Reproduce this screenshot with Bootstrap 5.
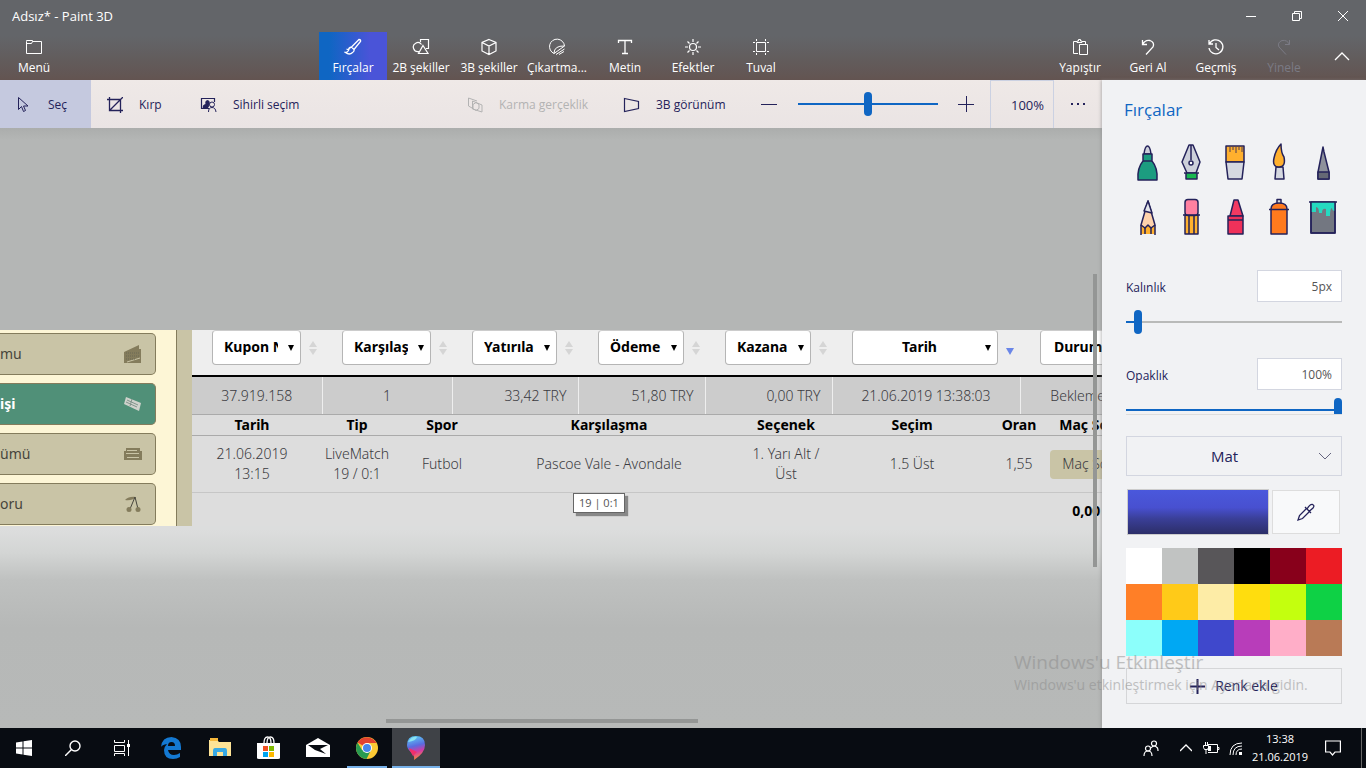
<!DOCTYPE html>
<html lang="tr">
<head>
<meta charset="utf-8">
<meta name="viewport" content="width=device-width, initial-scale=1">
<title>Adsız* - Paint 3D</title>
<link rel="stylesheet" href="https://cdn.jsdelivr.net/npm/bootstrap@5.3.0/dist/css/bootstrap.min.css">
<style>
:root{--ink:#24225a;--accent:#0f66c3;--tan:#c9c4a6;--olive:#847c5c}
body{font-family:"Open Sans","Noto Sans",sans-serif;font-size:12px;line-height:16px;color:var(--ink);overflow:hidden}
button,input,select{font:inherit;color:inherit}
button{background:none;border:0;padding:0}
svg{display:block;flex:none}
.line{fill:none;stroke:currentColor}
.app-head{background:linear-gradient(#636569 0,#636569 45%,#625c5c 75%,#635451 100%);color:#fff}
.title-bar{height:32px;font-size:13px}
.win-btn{width:46px;height:32px}
.ribbon{height:48px}
.tab-btn{width:68px;height:48px;padding-top:6px;gap:4px;white-space:nowrap}
.tab-on{background:linear-gradient(90deg,#0f66c3 15%,#4a54d8 75%)}
.tab-off{color:#7b7b85}
.tool-bar{height:48px;background:linear-gradient(#efe9e7,#eae4e4)}
.tool-btn{padding:1px 24px 0 16px;gap:16px;white-space:nowrap}
.tool-sel{background:#c5c9df;width:91px}
.tool-crop{width:93px}
.tool-mixed{width:156px;color:#b3b3b3}
.tool-view{width:138px}
.sq{width:48px}
.zoom-box{width:64px;border:1px solid #cbd1e2;border-width:1px 1px 0;text-align:right;padding:0 9px 0 0;background:none;font-size:13px}
.zoom-range{width:140px;margin:0 4px 0 5px}
input[type=range]{appearance:none;height:24px;padding:0;background:none;border:0;display:block}
input[type=range]::-webkit-slider-runnable-track{height:2px;background:linear-gradient(90deg,var(--accent) var(--fill,100%),#b9bab9 var(--fill,100%))}
input[type=range]::-webkit-slider-thumb{appearance:none;width:8px;height:24px;margin-top:-11px;border-radius:4px;background:var(--accent)}
.canvas-area{background:linear-gradient(#abadac 0,#b4b6b5 12px,#b4b6b5 380px,#dcdddd 381px,#dcdddd 402px,#d3d5d4 425px,#bfc1c0 452px,#b6b8b7 500px,#b7b9b8 100%);padding-top:202px;overflow:hidden}
.web-shot{height:196px;font-family:"Noto Sans","Open Sans",sans-serif;font-size:14px;line-height:20px;color:#3a3a40;overflow:hidden}
.web-menu{width:192px;background:#fdf6d6;border-right:15px solid var(--tan);box-shadow:inset -1px 0 var(--olive);padding-top:3px;gap:8px}
.web-item{width:156px;height:42px;flex:none;border:1px solid var(--olive);border-left:0;border-radius:0 5px 5px 0;background:var(--tan);padding:0 12px 0 0;color:#46453c}
.web-on{background:#509078;color:#fff;font-weight:700}
.web-grid{background:#ddd;overflow:hidden}
.web-grid table{table-layout:fixed;width:960px;margin:0;border-collapse:collapse}
.web-grid th,.web-grid td{padding:0;text-align:center;vertical-align:middle}
.web-grid td{font-weight:300}
.filters th{background:#eee;height:46px;border-bottom:2px solid #000;vertical-align:top}
.filters div{padding-left:20px}
.pick{appearance:none;height:35px;flex:none;margin-right:8px;border:1px solid #b5b5b5;border-top-color:#ccc;border-radius:4px;background:#fff url("data:image/svg+xml,%3Csvg xmlns='http://www.w3.org/2000/svg' width='6' height='6'%3E%3Cpath d='M0 0h6L3 6z'/%3E%3C/svg%3E") no-repeat right 6px center;padding:0 22px 2px 11px;color:#000;font-weight:700}
.slip td{height:38px;background:#ccc;border-right:1px solid #eee}
.slip .num{text-align:right;padding-right:11px}
.names th{height:21px;border:1px solid #aaa;border-width:1px 0;color:#000;line-height:18px}
.entry td{height:57px;border-bottom:1px solid #c6c6c6}
.score-btn{background:var(--tan);border-radius:4px;height:29px;padding:0 12px;white-space:nowrap}
.sum td{height:36px;color:#000;font-weight:700}
.tip-box{left:573px;bottom:215px;background:#fff;border:1px solid #666;padding:1px 5px;box-shadow:3px 3px 1px #888;color:#555;font-size:11px}
.scroll-v{right:5px;top:146px;width:4px;height:293px;background:#949695}
.scroll-h{left:35%;bottom:5px;width:312px;height:4px;background:#949695}
.side{width:264px;background:#f1f2f4;padding:20px 24px 24px;box-shadow:-1px 0 3px #8888}
.side h1{font-size:17px;line-height:20px;color:var(--accent);margin:0 0 23px -2px;font-weight:400}
.brushes{display:grid;grid-template-columns:repeat(5,44px);row-gap:15px;margin-left:-1px}
.brushes svg{width:44px;height:40px;stroke:var(--ink);stroke-width:1.5;stroke-linejoin:round}
.val{width:85px;height:32px;border:1px solid #d3d6e0;background:#fff;text-align:right;padding:0 9px;color:#555;font-size:12px}
.size-row{margin-top:32px}
.op-row{margin-top:24px}
.op-clip{height:17px;margin-top:8px;overflow:hidden;border-bottom:1px solid #ddd}
.finish{appearance:none;height:40px;margin-top:21px;border:1px solid #d3d6e0;background:url("data:image/svg+xml,%3Csvg xmlns='http://www.w3.org/2000/svg' width='12' height='8' fill='none' stroke='%23666680'%3E%3Cpath d='M0 1l6 6 6-6'/%3E%3C/svg%3E") no-repeat right 10px center;font-size:15px;text-align:center;padding:0 19px 0 0}
.color-row{margin:13px 2px 0 1px}
.now{width:142px;height:46px;border:1px solid #ccc;background:linear-gradient(#4a58dc 0,#4850d0 40%,#3a3f98 65%,#2c2e68 100%)}
.dropper{width:68px;height:44px;border:1px solid #ddd;background:#f8f9fa}
.palette{display:grid;grid-template-columns:repeat(6,1fr);margin-top:13px}
.palette button{height:36px}
.add-btn{height:36px;margin-top:12px;border:1px solid #d5d6d8;font-size:14px;gap:10px}
.wm{right:54px;bottom:73px;width:298px;color:#8b8b8b;opacity:.5;pointer-events:none;white-space:nowrap;font-size:14px;line-height:20px}
.wm div:first-child{font-size:19px;line-height:26px}
.task-bar{height:40px;background:#080c12;color:#fff}
.tb{width:48px;height:40px;display:flex;align-items:center;justify-content:center;flex:none}
.tb-run{box-shadow:inset 0 -2px #76b0e8;width:40px;margin:0 4px}
.tb-on{background:#3f4247;box-shadow:inset 0 -2px #76b0e8}
.w26{width:26px}.w24{width:24px}.w44{width:44px}.w40{width:40px}
.clock{width:66px;line-height:18px;text-align:center;white-space:nowrap;font-size:11px}
.peek{width:5px;margin-left:8px;border-left:1px solid #666}
</style>
</head>
<body class="d-flex flex-column vh-100">
<header class="app-head">
  <div class="title-bar d-flex align-items-center">
    <span class="ms-2 ps-1 me-auto">Adsız* - Paint 3D</span>
    <button class="win-btn d-flex align-items-center justify-content-center" aria-label="Simge durumuna küçült"><svg width="10" height="10" class="line"><path d="M0 5.500h10"/></svg></button>
    <button class="win-btn d-flex align-items-center justify-content-center" aria-label="Önceki boyut"><svg width="10" height="10" class="line"><path d="M.5 2.500h7v7h-7zM2.500 2V.5h7v7H8"/></svg></button>
    <button class="win-btn d-flex align-items-center justify-content-center" aria-label="Kapat"><svg width="10" height="10" class="line"><path d="M0 0l10 10M10 0L0 10"/></svg></button>
  </div>
  <nav class="ribbon d-flex">
    <button class="tab-btn d-flex flex-column align-items-center"><svg width="18" height="18" class="line"><path d="M1.500 3.500v12h15v-12H7.500v-1h-6zM1.500 5.500h5l1-2"/></svg>Menü</button>
    <div class="d-flex mx-auto">
      <button class="tab-btn tab-on d-flex flex-column align-items-center"><svg width="18" height="18" class="line" stroke-width="1.300"><path d="M15 1.500q2 0 1.500 2L10 11.500 7.500 9zM7.500 9q-3 .5-3 3.500-1 2-3 2 4 3 7 0 2-1 1.500-3M5 12l-2.500-1"/></svg>Fırçalar</button>
      <button class="tab-btn d-flex flex-column align-items-center"><svg width="18" height="18" class="line" stroke-width="1.200"><path d="M8.500 4V1.500h8v9h-2.500M7 13.500a4.500 4.500 0 1 1 2.500-7M11 7.500l5 8H6.500z"/></svg>2B şekiller</button>
      <button class="tab-btn d-flex flex-column align-items-center"><svg width="18" height="18" class="line" stroke-width="1.200"><path d="M9 1.500l7 3v8.500L9 16.500l-7-3.500V4.500zM2 4.500l7 3.500 7-3.500M9 8v8.500"/></svg>3B şekiller</button>
      <button class="tab-btn d-flex flex-column align-items-center"><svg width="18" height="18" class="line"><path d="M6 15.500A7.500 7.500 0 1 1 16.500 8M6 15.500q0-8 10.500-7.500M6 15.500L16.500 8M8 16.500l8.500-5.500M11 16.500l5-3"/></svg>Çıkartma...</button>
      <button class="tab-btn d-flex flex-column align-items-center"><svg width="18" height="18" class="line"><path d="M2.500 5V2.500h13V5M9 2.500v13M6 15.500h6" stroke-width="1.300"/></svg>Metin</button>
      <button class="tab-btn d-flex flex-column align-items-center"><svg width="18" height="18" class="line" stroke-width="1.200"><circle cx="9" cy="9" r="3.500"/><path d="M9 1v3M9 14v3M1 9h3M14 9h3M3.500 3.500l2 2M12.500 12.500l2 2M14.500 3.500l-2 2M5.500 12.500l-2 2"/></svg>Efektler</button>
      <button class="tab-btn d-flex flex-column align-items-center"><svg width="18" height="18" class="line"><path d="M4.500 4.500h9v9h-9zM4.500 1v2M13.500 1v2M4.500 15v2M13.500 15v2M1 4.500h2M1 13.500h2M15 4.500h2M15 13.500h2"/></svg>Tuval</button>
    </div>
    <button class="tab-btn d-flex flex-column align-items-center"><svg width="18" height="18" class="line"><path d="M7 15.500H2.500v-12H6M11 3.500h3.500V6M6 4.500V3h1.500V1.500h2V3H11v1.500zM8.500 6.500h8v10h-8z"/></svg>Yapıştır</button>
    <button class="tab-btn d-flex flex-column align-items-center"><svg width="18" height="18" class="line"><path d="M3.500 2v4.500H8M3.500 6.500Q6 1.500 11 2.500q5 2 3 6.500L7 16.500" stroke-width="1.300"/></svg>Geri Al</button>
    <button class="tab-btn d-flex flex-column align-items-center"><svg width="18" height="18" class="line" stroke-width="1.300"><path d="M2 2v4h4M2.500 6a7 7 0 1 1-.5 4M9 5v4.500l3 2.500"/></svg>Geçmiş</button>
    <button class="tab-btn tab-off d-flex flex-column align-items-center" disabled><svg width="18" height="18" class="line"><path d="M14.500 2v4.500H10M14.500 6.500Q12 1.500 7 2.500q-5 2-3 6.500l7 7.500"/></svg>Yinele</button>
    <button class="sq d-flex align-items-center justify-content-center" aria-label="Şeridi daralt"><svg width="16" height="10" class="line" stroke-width="1.300"><path d="M1 9l7-7 7 7"/></svg></button>
  </nav>
</header>

<main class="d-flex flex-grow-1" style="min-height:0">
  <section class="d-flex flex-column flex-grow-1" style="min-width:0">
    <div class="tool-bar d-flex align-items-stretch flex-shrink-0">
      <button class="tool-btn tool-sel d-flex align-items-center"><svg width="16" height="18" class="line"><path d="M2.500 1.500v12l3-3 2 5 2-1-2-4.500H12z"/></svg>Seç</button>
      <button class="tool-btn tool-crop d-flex align-items-center"><svg width="16" height="16" class="line" stroke-width="1.300"><path d="M0 2.500h13.500V16M2.500 0v13.500H16M16 0L2.500 13.500"/></svg>Kırp</button>
      <button class="tool-btn d-flex align-items-center"><svg width="17" height="16" class="line"><path d="M9 11.500H1.500v-10h13V5" stroke-width="1.200"/><path d="M3 10.500q0-3 3-3-1-4 1.500-4T9 7.500l-1 3z" fill="currentColor"/><circle cx="12" cy="7.500" r="2.500"/><path d="M8.500 15q0-4.500 3.500-4.500t4 4.500"/></svg>Sihirli seçim</button>
      <button class="tool-btn tool-mixed d-flex align-items-center ms-auto" disabled><svg width="16" height="16" class="line"><path d="M10 4L1.500 1v8L5 11M5.500 12V4L15 8v7zM6 7.500l3-2 3 2v4l-3 2-3-2z"/></svg>Karma gerçeklik</button>
      <button class="tool-btn tool-view d-flex align-items-center"><svg width="17" height="16" class="line" stroke-width="1.200"><path d="M1.500 1.500l14 3v7l-14 3z"/></svg>3B görünüm</button>
      <button class="sq d-flex align-items-center justify-content-center" aria-label="Uzaklaştır"><svg width="16" height="16" class="line"><path d="M0 8.500h16"/></svg></button>
      <input class="zoom-range align-self-center" type="range" min="0" max="100" value="50" aria-label="Yakınlaştırma">
      <button class="sq d-flex align-items-center justify-content-center" aria-label="Yakınlaştır"><svg width="16" height="16" class="line"><path d="M0 8.500h16M8.500 0v16"/></svg></button>
      <input class="zoom-box" value="100%" aria-label="Yakınlaştırma yüzdesi">
      <button class="sq d-flex align-items-center justify-content-center" aria-label="Diğer"><svg width="16" height="4" fill="currentColor"><path d="M1 1h2v2H1zM7 1h2v2H7zM13 1h2v2h-2z"/></svg></button>
    </div>
    <div class="canvas-area position-relative flex-grow-1">
      <div class="web-shot d-flex">
        <nav class="web-menu d-flex flex-column flex-shrink-0">
          <button class="web-item d-flex align-items-center justify-content-between">mu<svg width="20" height="20" fill="#847c5c"><path d="M1 8L16 1v4h2v14H1z"/><path d="M4 18l13-4" stroke="#c9c4a6"/><path d="M3 9h13M3 12h13M3 15h10" stroke="#6b6854" stroke-dasharray="1"/></svg></button>
          <button class="web-item web-on d-flex align-items-center justify-content-between">işi<svg width="20" height="20" fill="#cfd2cc"><path d="M3 3l15 6-2 8L1 10z"/><path d="M4 6l11 5M3 8l11 5M9 5l-2 7" stroke="#82948c" fill="none"/></svg></button>
          <button class="web-item d-flex align-items-center justify-content-between">ümü<svg width="20" height="20" fill="#847c5c"><path d="M3 4h14v3h2v9H1V7h2z"/><path d="M4 6.500h10M3 9.500h13M4 13.500h12" stroke="#c9c4a6"/></svg></button>
          <button class="web-item d-flex align-items-center justify-content-between">oru<svg width="20" height="20" fill="#847c5c"><path d="M2 6q4-4 11-3-4 4-11 3z"/><path d="M12 3L7 15M12 3l3 12" class="line" stroke="#847c5c"/><circle cx="6" cy="15.500" r="2.500"/><circle cx="15" cy="15.500" r="2.500"/></svg></button>
        </nav>
        <div class="web-grid flex-grow-1">
          <table>
            <colgroup><col style="width:130px"><col style="width:130px"><col style="width:126px"><col style="width:127px"><col style="width:127px"><col style="width:188px"><col></colgroup>
            <thead><tr class="filters">
              <th><div class="d-flex align-items-center"><select class="pick" style="width:89px" aria-label="Kupon No"><option>Kupon N</option></select><svg width="8" height="14" fill="#d5d5d5"><path d="M0 6l4-6 4 6zM0 8h8l-4 6z"/></svg></div></th>
              <th><div class="d-flex align-items-center"><select class="pick" style="width:89px" aria-label="Karşılaşma"><option>Karşılaş</option></select><svg width="8" height="14" fill="#d5d5d5"><path d="M0 6l4-6 4 6zM0 8h8l-4 6z"/></svg></div></th>
              <th><div class="d-flex align-items-center"><select class="pick" style="width:85px" aria-label="Yatırılan"><option>Yatırıla</option></select><svg width="8" height="14" fill="#d5d5d5"><path d="M0 6l4-6 4 6zM0 8h8l-4 6z"/></svg></div></th>
              <th><div class="d-flex align-items-center"><select class="pick" style="width:86px" aria-label="Ödeme"><option>Ödeme</option></select><svg width="8" height="14" fill="#d5d5d5"><path d="M0 6l4-6 4 6zM0 8h8l-4 6z"/></svg></div></th>
              <th><div class="d-flex align-items-center"><select class="pick" style="width:86px" aria-label="Kazanç"><option>Kazana</option></select><svg width="8" height="14" fill="#d5d5d5"><path d="M0 6l4-6 4 6zM0 8h8l-4 6z"/></svg></div></th>
              <th><div class="d-flex align-items-center"><select class="pick text-center" style="width:146px" aria-label="Tarih"><option>Tarih</option></select><svg width="8" height="14" fill="#6a86e8"><path d="M0 7h8l-4 7z"/></svg></div></th>
              <th><div class="d-flex align-items-center"><select class="pick" style="width:110px;padding-left:13px" aria-label="Durum"><option>Durum</option></select></div></th>
            </tr></thead>
            <tbody><tr class="slip"><td>37.919.158</td><td>1</td><td class="num">33,42 TRY</td><td class="num">51,80 TRY</td><td class="num">0,00 TRY</td><td>21.06.2019 13:38:03</td><td>Beklemede</td></tr></tbody>
          </table>
          <table>
            <colgroup><col style="width:120px"><col style="width:90px"><col style="width:80px"><col style="width:254px"><col style="width:100px"><col style="width:152px"><col style="width:62px"><col></colgroup>
            <thead><tr class="names"><th>Tarih</th><th>Tip</th><th>Spor</th><th>Karşılaşma</th><th>Seçenek</th><th>Seçim</th><th>Oran</th><th>Maç Sonucu</th></tr></thead>
            <tbody>
              <tr class="entry"><td>21.06.2019<br>13:15</td><td>LiveMatch<br>19 / 0:1</td><td>Futbol</td><td>Pascoe Vale - Avondale</td><td>1. Yarı Alt /<br>Üst</td><td>1.5 Üst</td><td>1,55</td><td><button class="score-btn">Maç Sonucu</button></td></tr>
              <tr class="sum"><td colspan="7"></td><td class="fw-bold">0,00 TRY</td></tr>
            </tbody>
          </table>
        </div>
      </div>
      <div class="tip-box position-absolute" role="tooltip">19 | 0:1</div>
      <div class="scroll-v position-absolute"></div>
      <div class="scroll-h position-absolute"></div>
    </div>
  </section>

  <aside class="side flex-shrink-0 position-relative">
    <h1>Fırçalar</h1>
    <div class="brushes">
      <button aria-label="Keçeli kalem"><svg viewBox="0 0 44 40"><path d="M19 11q1-8 3.500-8T26 11z" fill="#cdd0da"/><path d="M18 11h9v7q6 7 5 19H13q-1-12 5-19z" fill="#1c9c80"/><path d="M18 18h9"/></svg></button>
      <button aria-label="Hat kalemi"><svg viewBox="0 0 44 40"><path d="M20 2h4l7 17-4 11h-9l-5-11z" fill="#cdd0da"/><path d="M17 30h11v6H17zM15 30h15" fill="#18b850"/><path d="M22 2v15"/><circle cx="22" cy="20" r="2" fill="#fff"/></svg></button>
      <button aria-label="Yağlı boya fırçası"><svg viewBox="0 0 44 40"><path d="M13 3h18v16H13z" fill="#ffb02e"/><path d="M13 19h18l-2 17H15z" fill="#d5d8e0"/><path d="M17 4v5M20 4v3M23 4v6M26 4v3M29 4v5" stroke-width=".8"/></svg></button>
      <button aria-label="Sulu boya"><svg viewBox="0 0 44 40"><path d="M19 24h7l1 12h-9z" fill="#d5d8e0"/><path d="M24 1q0 9 3 13 2 10-5 10-7 0-5-9 2-9 7-14z" fill="#ffb02e"/></svg></button>
      <button aria-label="Piksel kalem"><svg viewBox="0 0 44 40"><path d="M22 4l1 5 5 20v7H17v-7l4-20z" fill="#8e919b"/><path d="M17 29h11v7H17z" fill="#656875"/></svg></button>
      <button aria-label="Kurşun kalem"><svg viewBox="0 0 44 40"><path d="M16 26h14v10H16z" fill="#ffb02e" stroke="none"/><path d="M23 3l7 24-4 3-3-3-3 3-4-3z" fill="#ffd3ac"/><path d="M23 3l4 12-8-2z" fill="#e4e6ec"/><path d="M16 27v10M30 27v10M20 30v6M26 30v6"/></svg></button>
      <button aria-label="Silgi"><svg viewBox="0 0 44 40"><path d="M16 17h13v19H16z" fill="#ffb02e"/><rect x="16" y="1.500" width="13" height="16" rx="3" fill="#ff80a0"/><path d="M14 17h17M20 18v18M25 18v18"/></svg></button>
      <button aria-label="Mum boya"><svg viewBox="0 0 44 40"><path d="M17 18l4-16h4l5 16z" fill="#f23a62"/><path d="M15 18h15v18H15z" fill="#ef315a"/><path d="M15 22h15"/></svg></button>
      <button aria-label="Sprey boya"><svg viewBox="0 0 44 40"><path d="M20 1.500h4V6h-4z" fill="#ddd"/><path d="M14 11q0-6 8-6t8 6v25H14z" fill="#ff7a1e"/><path d="M12 11.500h20"/></svg></button>
      <button aria-label="Doldur"><svg viewBox="0 0 44 40"><path d="M10 4h24v31H10z" fill="#737781"/><path d="M10 4h24v9q-3 0-3-3-2 0-2 8h-4v-7q-4-1-4 4h-3q0-6-3-6v5h-5z" fill="#25d9c0" stroke="none"/><path d="M10 4h24v31H10zM8 4h28" fill="none"/></svg></button>
    </div>
    <div class="size-row d-flex align-items-center justify-content-between"><label for="sz" class="pt-1">Kalınlık</label><input id="sz" class="val" value="5px"></div>
    <input class="w-100 mt-2" type="range" min="1" max="100" value="5" aria-label="Kalınlık" style="--fill:6%">
    <div class="op-row d-flex align-items-center justify-content-between"><label for="op" class="pt-1">Opaklık</label><input id="op" class="val" value="100%"></div>
    <div class="op-clip"><input class="w-100" type="range" min="0" max="100" value="100" aria-label="Opaklık"></div>
    <select class="finish w-100" aria-label="Kaplama"><option>Mat</option></select>
    <div class="color-row d-flex justify-content-between align-items-center">
      <button class="now" aria-label="Geçerli renk"></button>
      <button class="dropper d-flex align-items-center justify-content-center" aria-label="Renk seçici"><svg width="18" height="18" class="line" stroke-width="1.300"><path d="M9.500 5.500l-7 7L1 17l4.500-1.500 7-7M8 4l6 6M10 6q3-5 5.500-4.500 2.500 1 .5 3.500l-4 3.500"/></svg></button>
    </div>
    <div class="palette">
      <button style="background:#fff" aria-label="Beyaz"></button><button style="background:#c1c3c2" aria-label="Açık gri"></button><button style="background:#585659" aria-label="Koyu gri"></button><button style="background:#000" aria-label="Siyah"></button><button style="background:#88001b" aria-label="Koyu kırmızı"></button><button style="background:#ec1c24" aria-label="Kırmızı"></button>
      <button style="background:#ff7f27" aria-label="Turuncu"></button><button style="background:#ffca18" aria-label="Altın"></button><button style="background:#fdeca6" aria-label="Krem"></button><button style="background:#ffdd0e" aria-label="Sarı"></button><button style="background:#c4ff0e" aria-label="Limon"></button><button style="background:#0ed145" aria-label="Yeşil"></button>
      <button style="background:#8cfffb" aria-label="Turkuaz"></button><button style="background:#00a8f3" aria-label="Mavi"></button><button style="background:#3f48cc" aria-label="Çivit"></button><button style="background:#b83dba" aria-label="Mor"></button><button style="background:#ffaec8" aria-label="Pembe"></button><button style="background:#b97a56" aria-label="Kahverengi"></button>
    </div>
    <button class="add-btn w-100 d-flex align-items-center justify-content-center"><svg width="15" height="15" class="line" stroke-width="2"><path d="M0 7.500h15M7.500 0v15"/></svg>Renk ekle</button>
  </aside>
</main>

<div class="wm position-absolute"><div>Windows'u Etkinleştir</div><div>Windows'u etkinleştirmek için Ayarlar'a gidin.</div></div>

<footer class="task-bar d-flex flex-shrink-0 position-relative">
  <div class="d-flex me-auto" style="gap:1px">
    <button class="tb" aria-label="Başlat"><svg width="16" height="16" fill="#fff"><path d="M0 2.500L6.500 1.500v6H0zM7.500 1.300L16 0v7.500H7.500zM0 8.500h6.500v6L0 13.500zM7.500 8.500H16V16l-8.500-1.300z"/></svg></button>
    <button class="tb" aria-label="Ara"><svg width="16" height="16" class="line" stroke-width="1.400"><circle cx="10" cy="6" r="5"/><path d="M6.500 9.500L0 16"/></svg></button>
    <button class="tb" aria-label="Görev görünümü"><svg width="18" height="16" class="line"><path d="M1.500 0v2.500h10V0M1.500 5.500h10v6h-10zM1.500 16v-2.500h10V16M15.500 0v16"/><path d="M14 4h3v3h-3z" fill="#fff" stroke="none"/></svg></button>
    <button class="tb" aria-label="Edge"><svg width="20" height="22" fill="#1479d2"><path d="M0 10Q1 0 10.500 0 20 1 20 10v3H7q1 5 6 5 3 0 6-2v4q-3 2-7 2-9 0-9-9 0-3 3-6Q1 8 0 10zm7-1h7q0-4-3.500-4T7 9z"/></svg></button>
    <button class="tb" aria-label="Dosya Gezgini"><svg width="22" height="20"><path d="M0 2h8l2 2h12v14H0z" fill="#fde396"/><path d="M1 0h8v3H1z" fill="#f6b83c"/><path d="M4 18v-5q0-3 2-3h10q2 0 2 3v5h-4v-4H8v4z" fill="#38a9e4"/></svg></button>
    <button class="tb" aria-label="Mağaza"><svg width="24" height="24"><path d="M7 7q0-6 3.500-6T14 7M10 7q0-6 3.500-6T17 7" class="line" stroke="#fff" stroke-width="1.300"/><path d="M0 7h23v15q0 1-2 1H2q-2 0-2-1z" fill="#fff"/><path d="M6 10h5v5H6z" fill="#f05022"/><path d="M12 10h5v5h-5z" fill="#7fba00"/><path d="M6 16h5v5H6z" fill="#00a4ef"/><path d="M12 16h5v5h-5z" fill="#ffb900"/></svg></button>
    <button class="tb" aria-label="Posta"><svg width="24" height="20"><path d="M0 7l12-7 12 7v12H0z" fill="#fff"/><path d="M2 7h20l-8 4 6 5L9 12z" fill="#080c12"/></svg></button>
    <button class="tb tb-run" aria-label="Chrome"><svg width="22" height="22" viewBox="0 0 22 22"><circle cx="11" cy="11" r="11" fill="#fcc934"/><path d="M11 11L1.500 5.500A11 11 0 0 1 20.500 6H11z" fill="#e2422f"/><path d="M1.500 5.500a11 11 0 0 0 9 16.500l4.500-9H6z" fill="#289b51"/><circle cx="11" cy="11" r="5" fill="#fff"/><circle cx="11" cy="11" r="4" fill="#4786ea"/></svg></button>
    <button class="tb tb-on" aria-label="Paint 3D"><svg width="20" height="24" viewBox="0 0 20 24"><defs><linearGradient id="drop" x1=".4" x2=".6" y2="1"><stop offset="0" stop-color="#5cc9f5"/><stop offset=".4" stop-color="#5a6ce0"/><stop offset=".65" stop-color="#d23ba5"/><stop offset="1" stop-color="#ff9230"/></linearGradient></defs><path d="M10 0q9 0 9 9 0 8-11 15 1-4-3-8-4-3-4-7 0-9 9-9z" fill="url(#drop)"/><path d="M2 6q4-6 9-5-1 4-9 5z" fill="#8ae3f2"/><path d="M3 12l8 4-4 4-3-5z" fill="#f0306b"/></svg></button>
  </div>
  <button class="tb w44" aria-label="Kişiler"><svg width="16" height="16" class="line" stroke-width="1.200"><circle cx="11" cy="3.500" r="2.500"/><path d="M8 8q3-4 6.500 0 .5 1 .5 3"/><circle cx="5" cy="8.500" r="2.500"/><path d="M1 16q0-5 4-5t4 5"/></svg></button>
  <button class="tb w26" aria-label="Gizli simgeler"><svg width="12" height="8" class="line" stroke-width="1.300"><path d="M0 7l6-6 6 6"/></svg></button>
  <button class="tb w24" aria-label="Pil"><svg width="17" height="14" class="line"><path d="M5 3.500h9.500v8H5M15 6.500h1v2h-1M2.500 1v3M4.500 1v3M.5 4.500h5v2l-1 2h-3l-1-2zM3 8.500V13"/><path d="M5 5h3v5H5z" fill="#fff" stroke="none"/></svg></button>
  <button class="tb w24" aria-label="Wi-Fi"><svg width="13" height="13" class="line"><path d="M1 13Q1 1 13 1M4 13q0-9 9-9M7 13q0-6 6-6" /><path d="M10 10h3v3h-3z" fill="#fff" stroke="none"/></svg></button>
  <button class="clock">13:38<br>21.06.2019</button>
  <button class="tb w40" aria-label="Bildirimler"><svg width="16" height="16" class="line" stroke-width="1.200"><path d="M.6 1h14.800v11H10l-2.500 3L5 12H.6z"/></svg></button>
  <div class="peek"></div>
</footer>
<script src="https://cdn.jsdelivr.net/npm/bootstrap@5.3.0/dist/js/bootstrap.bundle.min.js"></script>
</body>
</html>
